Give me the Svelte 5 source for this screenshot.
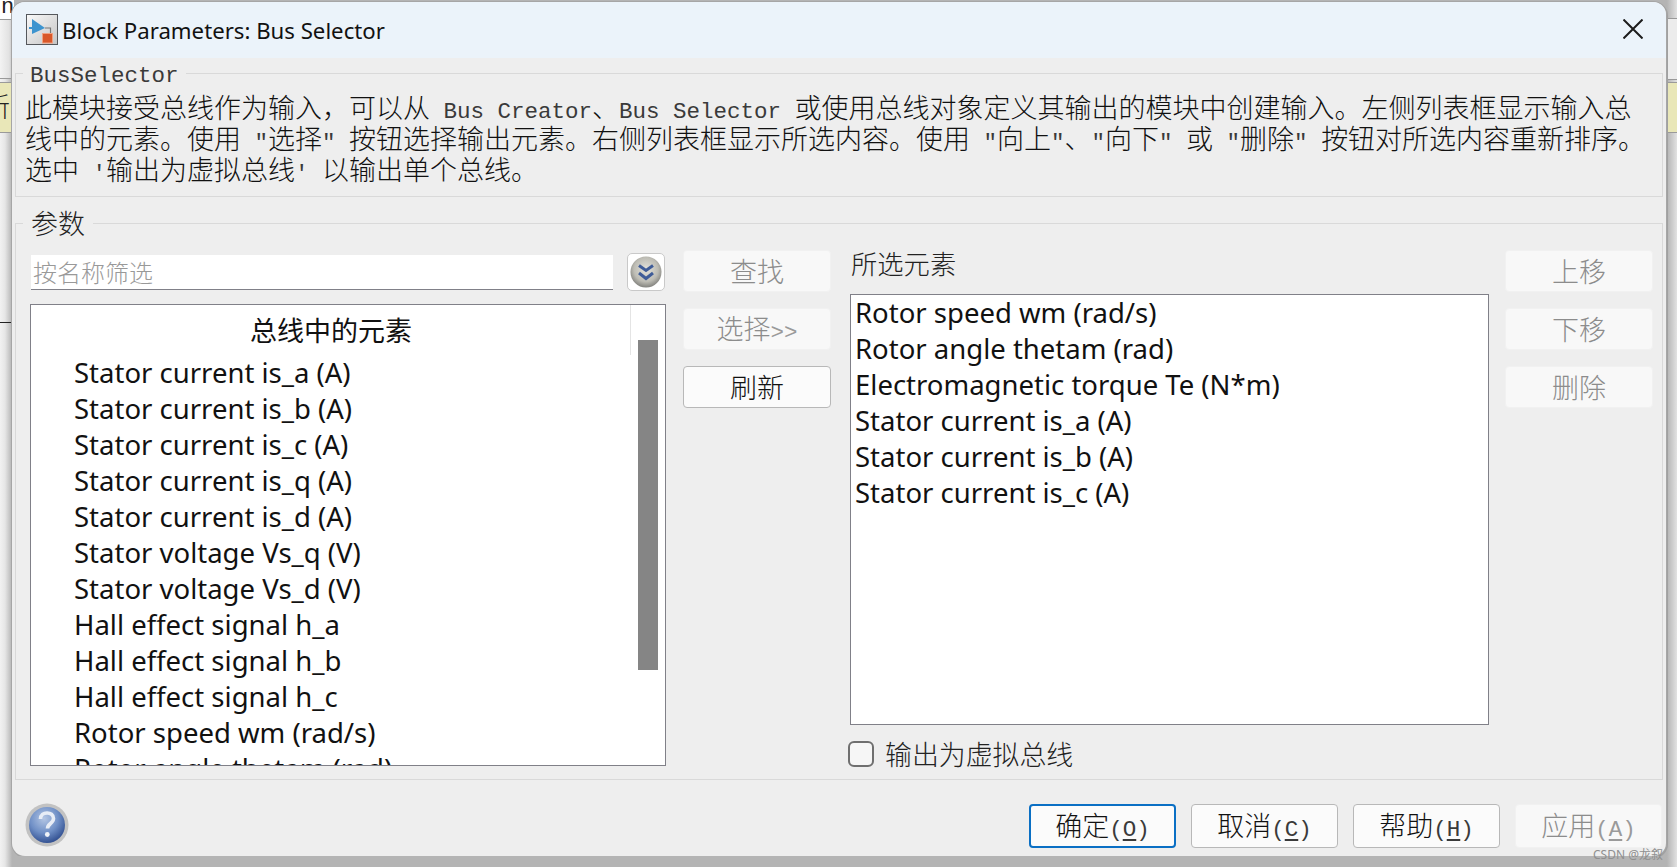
<script>
  const inputs = [
    'Stator current is_a (A)',
    'Stator current is_b (A)',
    'Stator current is_c (A)',
    'Stator current is_q (A)',
    'Stator current is_d (A)',
    'Stator voltage Vs_q (V)',
    'Stator voltage Vs_d (V)',
    'Hall effect signal h_a',
    'Hall effect signal h_b',
    'Hall effect signal h_c',
    'Rotor speed wm (rad/s)',
    'Rotor angle thetam (rad)',
    'Electromagnetic torque Te (N*m)'
  ];
  const selected = [
    'Rotor speed wm (rad/s)',
    'Rotor angle thetam (rad)',
    'Electromagnetic torque Te (N*m)',
    'Stator current is_a (A)',
    'Stator current is_b (A)',
    'Stator current is_c (A)'
  ];
  const description = [
    '此模块接受总线作为输入，可以从 Bus Creator、Bus Selector 或使用总线对象定义其输出的模块中创建输入。左侧列表框显示输入总',
    '线中的元素。使用 "选择" 按钮选择输出元素。右侧列表框显示所选内容。使用 "向上"、"向下" 或 "删除" 按钮对所选内容重新排序。',
    "选中 '输出为虚拟总线' 以输出单个总线。"
  ];
  const footer = [
    { label: '确定', key: 'O', cls: 'focus' },
    { label: '取消', key: 'C', cls: '' },
    { label: '帮助', key: 'H', cls: '' },
    { label: '应用', key: 'A', cls: 'off' }
  ];

  // latin runs are set apart so they come out half the width of a CJK glyph
  function runs(text) {
    return text.split(/([\x00-\x7f]+)/).filter(Boolean).map((t) => ({
      t,
      latin: /^[\x00-\x7f]/.test(t)
    }));
  }
</script>

{#snippet song(text)}
  {#each runs(text) as r}{#if r.latin}<span class="latin">{r.t}</span>{:else}{r.t}{/if}{/each}
{/snippet}

<div class="backdrop" aria-hidden="true">
  <div class="pane corner"><span class="behind-n">n</span></div>
  <div class="pane left-mid"></div>
  <div class="pane right-mid"></div>
  <div class="strip left"><span class="behind-cut">新无</span></div>
  <div class="strip right"></div>
  <div class="rule"></div>
</div>

<div class="window">
  <header class="titlebar">
    <svg class="appicon" viewBox="0 0 32 31" width="32" height="31">
      <defs>
        <linearGradient id="framefill" x1="0" y1="0" x2="1" y2="1">
          <stop offset="0" stop-color="#fafafa" />
          <stop offset="1" stop-color="#c4c4c4" />
        </linearGradient>
      </defs>
      <rect x="0.5" y="0.5" width="31" height="30" fill="url(#framefill)" stroke="#55585c" />
      <path d="M19 14h5.5v6" fill="none" stroke="#777" stroke-width="1.2" />
      <path d="M6 5l13 9-13 6z" fill="#3d94cf" />
      <path d="M3 14h4" stroke="#3d94cf" stroke-width="2" />
      <rect x="16.5" y="19.5" width="10" height="9.5" fill="#d9582a" stroke="#f0a080" />
    </svg>
    <span class="title">Block Parameters: Bus Selector</span>
    <svg class="close" viewBox="0 0 20 20" width="20" height="20">
      <path d="M0.5 0.5l19 19M19.5 0.5l-19 19" stroke="#1c1c1c" stroke-width="2" />
    </svg>
  </header>

  <div class="content">
    <fieldset class="group info">
      <legend>{@render song('BusSelector')}</legend>
      {#each description as line}
        <div class="line">{@render song(line)}</div>
      {/each}
    </fieldset>

    <fieldset class="group params">
      <legend>{@render song('参数')}</legend>
      <div class="columns">
        <div class="col-left">
          <div class="filter">
            <div class="filter-input">{@render song('按名称筛选')}</div>
            <div class="more">
              <svg viewBox="0 0 32 32" width="32" height="32">
                <defs>
                  <radialGradient id="ball" cx="0.5" cy="0.42" r="0.6">
                    <stop offset="0" stop-color="#e4e3dc" />
                    <stop offset="0.65" stop-color="#bdbcb4" />
                    <stop offset="1" stop-color="#7c7c78" />
                  </radialGradient>
                </defs>
                <circle cx="16" cy="16" r="15.5" fill="url(#ball)" />
                <path d="M9 9.5l7 5 7-5M9 17l7 5.5 7-5.5" fill="none" stroke="#3f5c98" stroke-width="3" />
              </svg>
            </div>
          </div>
          <div class="list inputs">
            <div class="rows">
              <div class="list-head">总线中的元素</div>
              {#each inputs as item}
                <div class="row indent">{item}</div>
              {/each}
            </div>
            <div class="track"><div class="thumb"></div></div>
          </div>
        </div>

        <div class="buttons">
          <button class="btn off">{@render song('查找')}</button>
          <button class="btn off">{@render song('选择>>')}</button>
          <button class="btn">{@render song('刷新')}</button>
        </div>

        <div class="col-right">
          <div class="right-label">{@render song('所选元素')}</div>
          <div class="list chosen">
            {#each selected as item}
              <div class="row">{item}</div>
            {/each}
          </div>
          <div class="check">
            <span class="box"></span>
            <span class="check-label">{@render song('输出为虚拟总线')}</span>
          </div>
        </div>

        <div class="buttons">
          <button class="btn off">{@render song('上移')}</button>
          <button class="btn off">{@render song('下移')}</button>
          <button class="btn off">{@render song('删除')}</button>
        </div>
      </div>
    </fieldset>

    <footer class="footer">
      <svg class="help" viewBox="0 0 44 44" width="44" height="44">
        <defs>
          <radialGradient id="helpball" cx="0.42" cy="0.32" r="0.72">
            <stop offset="0" stop-color="#b4c6e4" />
            <stop offset="0.55" stop-color="#6f8fc6" />
            <stop offset="1" stop-color="#2c4a8c" />
          </radialGradient>
        </defs>
        <circle cx="22" cy="22" r="21.5" fill="#c2c2c2" />
        <circle cx="22" cy="22" r="18" fill="url(#helpball)" />
        <path d="M15.5 16c0-8 13-8 13-.5 0 5-6 5-6 10" fill="none" stroke="#e8edf6" stroke-width="3.6" />
        <circle cx="22.3" cy="31.5" r="2.4" fill="#f0f3f8" />
      </svg>
      <div class="footer-buttons">
        {#each footer as b}
          <button class="btn {b.cls}">
            {b.label}<span class="latin">(<u>{b.key}</u>)</span>
          </button>
        {/each}
      </div>
    </footer>
  </div>
</div>

<span class="mark">CSDN @龙叙</span>

<style>
  :global(body) {
    background: #c3c3c3;
    overflow: hidden;
  }
  .backdrop {
    position: absolute;
    inset: 0;
    background: linear-gradient(90deg, #f2f2f2 0, #e6e6e6 5px, #b4b4b4 12px, #b4b4b4 1667px, #e2e2e2 1677px);
  }
  .pane {
    position: absolute;
  }
  .corner {
    left: 0;
    top: 0;
    width: 14px;
    height: 19px;
    background: #fff;
    border-bottom: 1px solid #999;
    overflow: hidden;
  }
  .left-mid {
    left: 0;
    top: 20px;
    width: 13px;
    height: 58px;
    background: linear-gradient(90deg, #f3f3f3, #e2e2e2 70%, #bdbdbd);
    border-bottom: 1px solid #999;
  }
  .right-mid {
    left: 1668px;
    top: 18px;
    width: 9px;
    height: 60px;
    background: #ececec;
    border-top: 1px solid #999;
    border-bottom: 1px solid #999;
  }
  .behind-n {
    position: absolute;
    left: 1px;
    top: -5px;
    font: 22px "Liberation Mono", monospace;
    color: #222;
  }
  .strip {
    position: absolute;
    top: 82px;
    height: 49px;
    background: #e9e7b8;
    border-top: 1px solid #9a9a9a;
    border-bottom: 1px solid #9a9a9a;
    overflow: hidden;
  }
  .strip.left {
    left: 0;
    width: 12px;
  }
  .strip.right {
    left: 1668px;
    width: 9px;
  }
  .behind-cut {
    display: block;
    margin-left: -17px;
    white-space: nowrap;
    font: 300 27px/46px "Noto Sans CJK SC", sans-serif;
    color: #222;
  }
  .rule {
    position: absolute;
    left: 0;
    top: 322px;
    width: 12px;
    height: 1px;
    background: #222;
  }

  .window {
    position: relative;
    margin: 2px 0 0 12px;
    width: 1654px;
    height: 854px;
    box-sizing: border-box;
    display: flex;
    flex-direction: column;
    background: #eeeeee;
    border-radius: 13px;
    overflow: hidden;
    box-shadow: 0 0 0 1px #a6a6a6, 1px 1px 0 1px #a0a0a0;
    color: #111;
    font-family: "Noto Sans", sans-serif;
  }
  .titlebar {
    flex: none;
    height: 56px;
    display: flex;
    align-items: center;
    background: #ebf3fa;
    padding: 0 23px 0 14px;
  }
  .appicon {
    flex: none;
    margin-top: -2px;
  }
  .title {
    margin-left: 4px;
    margin-top: 1px;
    font-size: 22.2px;
    color: #111;
    white-space: nowrap;
  }
  .close {
    margin-left: auto;
    margin-top: -3px;
  }

  .content {
    flex: 1;
    display: flex;
    flex-direction: column;
    padding: 0 3px 0 3px;
    min-height: 0;
  }
  .group {
    margin: 0;
    min-width: 0;
    border: 1px solid #d9d9d9;
    box-sizing: border-box;
  }
  legend {
    font: 300 27px/30px "Noto Sans CJK SC", sans-serif;
    color: #222;
  }
  .info legend {
    margin-left: -2px;
    padding: 0 7px;
  }
  .params legend {
    margin-left: -7px;
    padding: 0 8px;
  }
  .latin {
    font-family: "Liberation Mono", monospace;
    font-size: 22.5px;
    font-weight: 400;
    color: #3a3a3a;
  }
  .btn.off .latin {
    color: #9a9a9a;
  }
  .info {
    height: 141px;
    margin-top: -2px;
    padding: 0 0 0 9px;
    font: 300 27px/31px "Noto Sans CJK SC", sans-serif;
    color: #111;
  }
  .line {
    white-space: pre;
    height: 31px;
  }
  .params {
    margin-top: 11px;
    height: 572px;
    padding: 12px 11px 12px 14px;
  }

  .columns {
    display: grid;
    grid-template-columns: 636px 148px 640px 148px;
    column-gap: 17px;
    height: 100%;
  }
  .col-left {
    padding-top: 3px;
    display: flex;
    flex-direction: column;
  }
  .filter {
    display: flex;
    align-items: center;
    height: 38px;
    padding-left: 1px;
    justify-content: space-between;
  }
  .filter-input {
    width: 582px;
    height: 35px;
    box-sizing: border-box;
    background: #fff;
    border-bottom: 1px solid #808088;
    padding-left: 2px;
    font: 300 24px/33px "Noto Sans CJK SC", sans-serif;
    color: #999;
  }
  .more {
    width: 38px;
    height: 38px;
    margin-right: 1px;
    box-sizing: border-box;
    background: #fff;
    border: 1px solid #c9c9c9;
    border-radius: 5px;
    display: flex;
    align-items: center;
    justify-content: center;
  }
  .list {
    box-sizing: border-box;
    background: #fff;
    border: 1px solid #808088;
    overflow: hidden;
  }
  .inputs {
    margin-top: 13px;
    height: 462px;
    display: flex;
  }
  .rows {
    flex: 1;
    min-width: 0;
  }
  .list-head {
    height: 50px;
    padding-left: 1px;
    text-align: center;
    font: 400 27px/50px "Noto Sans CJK SC", sans-serif;
    color: #111;
  }
  .row {
    height: 36px;
    line-height: 36px;
    font-size: 27.5px;
    white-space: nowrap;
    padding-left: 4px;
    color: #111;
  }
  .row.indent {
    padding-left: 43px;
  }
  .track {
    position: relative;
    flex: none;
    width: 35px;
    padding: 35px 7px 0 8px;
    box-sizing: border-box;
  }
  .track::before {
    content: '';
    position: absolute;
    left: 0;
    top: 0;
    height: 50px;
    width: 1px;
    background: #e4e4e4;
  }
  .thumb {
    height: 330px;
    background: #858585;
  }

  .buttons {
    display: flex;
    flex-direction: column;
    gap: 16px;
  }
  .btn {
    height: 42px;
    padding: 0;
    box-sizing: border-box;
    background: #fbfbfb;
    border: 1px solid #b8b8b8;
    border-radius: 4px;
    font: 300 27px/38px "Noto Sans CJK SC", sans-serif;
    color: #111;
    white-space: nowrap;
  }
  .btn.off {
    background: #f8f8f8;
    border-color: #f1f1f1;
    color: #8c8c8c;
  }
  .btn.focus {
    border: 2px solid #0a6fc4;
    line-height: 36px;
  }

  .col-right {
    display: flex;
    flex-direction: column;
    margin: 0 -1px 0 2px;
    min-width: 0;
  }
  .right-label {
    height: 44px;
    padding-left: 1px;
    font: 300 26.3px/26px "Noto Sans CJK SC", sans-serif;
    color: #222;
  }
  .chosen {
    height: 431px;
  }
  .check {
    margin-top: 16px;
    display: flex;
    align-items: center;
    height: 26px;
    margin-left: -2px;
  }
  .box {
    width: 26px;
    height: 26px;
    box-sizing: border-box;
    border: 2px solid #6f6f6f;
    border-radius: 6px;
    background: #f6f6f6;
  }
  .check-label {
    margin-left: 11px;
    font: 300 26.9px/28px "Noto Sans CJK SC", sans-serif;
    color: #222;
  }

  .footer {
    flex: 1;
    display: flex;
    align-items: flex-start;
    justify-content: space-between;
    padding: 24px 1px 0 10px;
  }
  .help {
    margin-top: -1px;
  }
  .footer-buttons {
    display: flex;
    gap: 15px;
  }
  .footer-buttons .btn {
    width: 147px;
    height: 44px;
    padding-top: 1px;
  }
  u {
    text-underline-offset: 3px;
    text-decoration-thickness: 2px;
  }

  .mark {
    position: absolute;
    left: 1593px;
    top: 845px;
    font: 12px "Noto Sans", "Noto Sans CJK SC", sans-serif;
    color: #8f8f8f;
    white-space: nowrap;
  }
</style>
